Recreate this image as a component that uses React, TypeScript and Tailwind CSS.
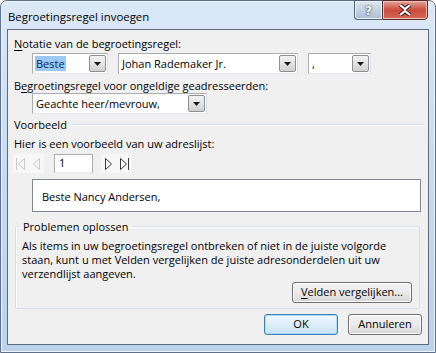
import React from "react";

const font = { fontFamily: '"Open Sans", "Noto Sans", sans-serif' };

function DropArrow() {
  return (
    <div className="flex h-[17px] w-[17px] items-center justify-center rounded-[2px] border border-[#8e8f8f] bg-gradient-to-b from-[#f2f2f2] via-[#e4e4e4] to-[#cfcfcf]">
      <svg width="7" height="4" viewBox="0 0 7 4">
        <path d="M0 0h7L3.5 4z" fill="#1a1a1a" />
      </svg>
    </div>
  );
}

function Combo({
  width,
  value,
  selected,
}: {
  width: string;
  value: string;
  selected?: boolean;
}) {
  return (
    <div
      className={`flex h-[21px] ${width} items-center justify-between border border-[#abadb3] border-b-[#e3e9ef] border-r-[#dbdfe6] bg-white pl-[2px] pr-[1px]`}
    >
      {selected ? (
        <span className="bg-[#99c9f4] px-[1px] leading-[15px] text-[#0a2a55]">{value}</span>
      ) : (
        <span className="pl-[1px] leading-[15px]">{value}</span>
      )}
      <DropArrow />
    </div>
  );
}

function WinButton({
  children,
  width,
  isDefault,
}: {
  children: React.ReactNode;
  width: string;
  isDefault?: boolean;
}) {
  return (
    <button
      className={`flex h-[21px] ${width} items-center justify-center rounded-[3px] border ${
        isDefault
          ? "border-[#3c7fb1] bg-gradient-to-b from-[#f0f8fd] via-[#ddeef9] to-[#c4e3f6] shadow-[inset_0_0_0_1px_#a9dcf6]"
          : "border-[#707070] bg-gradient-to-b from-[#f2f2f2] via-[#ebebeb] to-[#d6d6d6] shadow-[inset_0_0_0_1px_#fcfcfc]"
      } text-[11px] text-black`}
    >
      {children}
    </button>
  );
}

function NavIcon({ kind, disabled }: { kind: "first" | "prev" | "next" | "last"; disabled?: boolean }) {
  const c = disabled ? "#c9c9c9" : "#3b3b3b";
  return (
    <svg width="11" height="14" viewBox="0 0 11 14">
      {kind === "first" && (
        <>
          <path d="M1.5 1v12" stroke={c} fill="none" />
          <path d="M9.5 1.5L3.5 7 9.5 12.5z" stroke={c} fill="none" />
        </>
      )}
      {kind === "prev" && <path d="M8.5 1.5L2.5 7 8.5 12.5z" stroke={c} fill="none" />}
      {kind === "next" && <path d="M2.5 1.5L8.5 7 2.5 12.5z" stroke={c} fill="none" />}
      {kind === "last" && (
        <>
          <path d="M1.5 1.5L7.5 7 1.5 12.5z" stroke={c} fill="none" />
          <path d="M9.5 1v12" stroke={c} fill="none" />
        </>
      )}
    </svg>
  );
}

export default function App() {
  return (
    <div className="h-[353px] w-[436px] bg-white" style={font}>
      <div className="relative flex h-[353px] w-[436px] flex-col rounded-t-[7px] border border-[#5e7089] bg-gradient-to-b from-[#dbe8f6] via-[#c7daf0] to-[#bcd2ec] px-[6px] pb-[7px] shadow-[inset_0_0_0_1px_#eef4fb]">
        {/* title bar */}
        <div className="flex h-[28px] items-center pl-[1px] pt-[3px]">
          <span className="text-[11.4px] text-black">Begroetingsregel invoegen</span>
        </div>

        {/* caption buttons */}
        <div className="absolute right-[7px] top-[-1px] flex">
          <div className="flex h-[20px] w-[28px] items-center justify-center rounded-bl-[4px] border border-r-0 border-[#4f6177] bg-gradient-to-b from-[#dfe7f0] via-[#c5d2e0] to-[#aebdd0] shadow-[inset_0_0_0_1px_#eef3f8]">
            <span
              className="text-[13px] font-bold leading-none text-white [text-shadow:0_0_1px_#2c3e55,0_0_2px_#2c3e55]"
              style={{ fontFamily: '"DejaVu Sans", sans-serif' }}
            >
              ?
            </span>
          </div>
          <div className="flex h-[20px] w-[46px] items-center justify-center rounded-br-[4px] border border-[#5a2a2a] bg-gradient-to-b from-[#e4a69a] via-[#c94a3a] to-[#d66a55] shadow-[inset_0_0_0_1px_#eec2b8]">
            <svg width="14" height="12" viewBox="0 0 14 12">
              <path d="M2 1l5 4 5-4M2 11l5-4 5 4" stroke="#3a1515" strokeWidth="4" fill="none" />
              <path d="M2 1l5 4 5-4M2 11l5-4 5 4" stroke="#ffffff" strokeWidth="2.2" fill="none" />
            </svg>
          </div>
        </div>

        {/* client area */}
        <div className="flex flex-1 flex-col border border-[#5b6b7f] bg-[#f0f0f0] text-[11px] text-black">
          <div className="mt-[6px] pl-[6px] leading-[15px]">
            <span className="underline underline-offset-2">N</span>otatie van de begroetingsregel:
          </div>
          <div className="ml-[24px] mt-[2px] flex gap-[10px]">
            <Combo width="w-[76px]" value="Beste" selected />
            <Combo width="w-[180px]" value="Johan Rademaker Jr." />
            <Combo width="w-[63px]" value="," />
          </div>

          <div className="mt-[4px] pl-[6px] leading-[15px]">
            B<span className="underline underline-offset-2">e</span>groetingsregel voor ongeldige geadresseerden:
          </div>
          <div className="ml-[24px] mt-0">
            <Combo width="w-[175px]" value="Geachte heer/mevrouw," />
          </div>

          <div className="mt-[3px] flex items-center pl-[6px] pr-[4px] leading-[15px]">
            <span>Voorbeeld</span>
            <div className="ml-[5px] h-[2px] flex-1 border-t border-b border-t-[#d5dfe5] border-b-white" />
          </div>

          <div className="mt-[4px] pl-[6px] leading-[15px]">Hier is een voorbeeld van uw adreslijst:</div>

          <div className="mt-[3px] flex h-[19px] items-center pl-[5px]">
            <div className="flex h-[19px] items-center gap-[5px] bg-[#f7f7f7] px-[2px]">
              <NavIcon kind="first" disabled />
              <NavIcon kind="prev" disabled />
            </div>
            <div className="ml-[10px] flex h-[19px] w-[39px] items-center border border-[#abadb3] border-b-[#e3e9ef] bg-white pl-[4px]">
              1
            </div>
            <div className="ml-[8px] flex h-[19px] items-center gap-[5px] bg-[#f7f7f7] px-[2px]">
              <NavIcon kind="next" />
              <NavIcon kind="last" />
            </div>
          </div>

          <div className="ml-[24px] mt-[6px] flex h-[33px] w-[389px] items-center border border-[#828790] bg-white pl-[9px] pt-[3px]">
            Beste Nancy Andersen,
          </div>

          <fieldset className="ml-[7px] mt-[7px] w-[405px] rounded-[2px] border border-[#d5dfe5] px-[6px] pb-[5px] shadow-[inset_1px_1px_0_#ffffff]">
            <legend className="ml-[-2px] px-[3px] leading-[15px]">Problemen oplossen</legend>
            <p className="mt-[5px] leading-[14px]">
              Als items in uw begroetingsregel ontbreken of niet in de juiste volgorde staan, kunt u met Velden vergelijken de juiste adresonderdelen uit uw verzendlijst aangeven.
            </p>
            <div className="mt-[1px] flex justify-end pr-[1px]">
              <WinButton width="w-[120px]">
                <span>
                  <span className="underline underline-offset-2">V</span>elden vergelijken...
                </span>
              </WinButton>
            </div>
          </fieldset>

          <div className="mt-[5px] flex justify-end gap-[10px] pr-[6px]">
            <WinButton width="w-[74px]" isDefault>
              OK
            </WinButton>
            <WinButton width="w-[74px]">Annuleren</WinButton>
          </div>
        </div>
      </div>
    </div>
  );
}
